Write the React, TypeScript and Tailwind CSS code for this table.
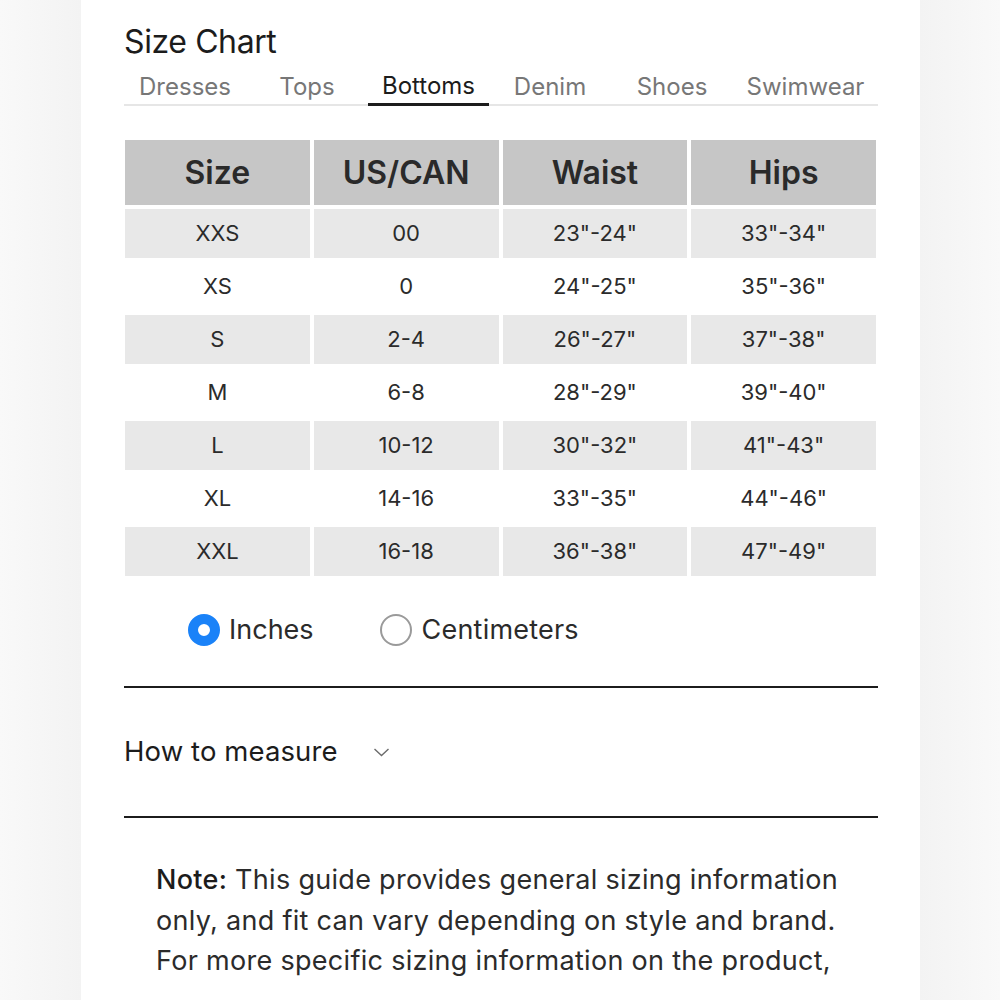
const tabs = [
  { label: "Dresses", w: "w-[122px]" },
  { label: "Tops", w: "w-[122px]" },
  { label: "Bottoms", w: "w-[121px]" },
  { label: "Denim", w: "w-[122px]" },
  { label: "Shoes", w: "w-[122px]" },
  { label: "Swimwear", w: "w-[145px]" },
];

const rows = [
  ["XXS", "00", '23"-24"', '33"-34"'],
  ["XS", "0", '24"-25"', '35"-36"'],
  ["S", "2-4", '26"-27"', '37"-38"'],
  ["M", "6-8", '28"-29"', '39"-40"'],
  ["L", "10-12", '30"-32"', '41"-43"'],
  ["XL", "14-16", '33"-35"', '44"-46"'],
  ["XXL", "16-18", '36"-38"', '47"-49"'],
];

export default function App() {
  return (
    <div className="flex h-[1000px] w-[1000px] overflow-hidden bg-[#f6f6f6] font-['Inter',sans-serif] text-[#2b2b2b]">
      <div className="w-[81px] shrink-0 bg-gradient-to-r from-[#f9f9f9] to-[#f3f3f3]" />
      <main className="w-[839px] shrink-0 bg-white pl-[43px] pr-[42px] pt-[24px]">
        <h1 className="text-[32px] leading-[36px] font-normal tracking-[-0.4px] text-[#1c1c1c]">Size Chart</h1>

        <nav className="flex h-[46px] items-stretch border-b-2 border-[#e6e6e6] text-[24px] leading-[30px]">
          {tabs.map((t) => (
            <div
              key={t.label}
              className={
                "flex items-end justify-center pb-[2px] " +
                t.w +
                (t.label === "Bottoms" ? " -mb-[2px] border-b-[3px] border-[#1c1c1c] text-[#1c1c1c]" : " text-[#777777]")
              }
            >
              {t.label}
            </div>
          ))}
        </nav>

        <div className="mt-[34px] ml-[1px] grid w-[751px] grid-cols-4 gap-x-[4px] gap-y-[4px]">
          {["Size", "US/CAN", "Waist", "Hips"].map((h) => (
            <div key={h} className="flex h-[65px] items-center justify-center bg-[#c6c6c6] text-[32px] font-semibold text-[#2a2a2a]">
              {h}
            </div>
          ))}
          {rows.map((r, ri) =>
            r.map((c, ci) => (
              <div
                key={ri + "-" + ci}
                className={
                  "flex h-[49px] items-center justify-center text-[22px] text-[#2b2b2b] " +
                  (ri % 2 === 0 ? "bg-[#e8e8e8]" : "bg-white")
                }
              >
                {c}
              </div>
            ))
          )}
        </div>

        <div className="mt-[34px] flex h-[40px] items-center pl-[64px] text-[27px] text-[#2b2b2b]">
          <div className="flex items-center gap-[9px]">
            <span className="h-[32px] w-[32px] rounded-full border-[10px] border-[#1a82f8] bg-white" />
            <span>Inches</span>
          </div>
          <div className="ml-[66px] flex items-center gap-[10px]">
            <span className="h-[32px] w-[32px] rounded-full border-2 border-[#9a9a9a] bg-white" />
            <span className="tracking-[0.2px]">Centimeters</span>
          </div>
        </div>

        <div className="mt-[36px] border-t-2 border-[#1c1c1c]" />

        <div className="flex h-[128px] items-center gap-[35px] text-[27.5px] tracking-[0.1px] text-[#1c1c1c]">
          <span>How to measure</span>
          <svg width="17" height="10" viewBox="0 0 17 10" fill="none" stroke="#6b6b6b" strokeWidth="1.4">
            <path d="M1.5 2 L8.5 8.5 L15.5 2" />
          </svg>
        </div>

        <div className="border-t-2 border-[#1c1c1c]" />

        <p className="mt-[42px] pl-[32px] text-[27px] leading-[40.5px] tracking-[0.3px] text-[#2b2b2b]">
          <span className="font-medium text-[#1c1c1c]">Note:</span> This guide provides general sizing information
          <br />
          only, and fit can vary depending on style and brand.
          <br />
          For more specific sizing information on the product,
        </p>
      </main>
      <div className="w-[80px] shrink-0 bg-gradient-to-r from-[#f3f3f3] to-[#f9f9f9]" />
    </div>
  );
}
